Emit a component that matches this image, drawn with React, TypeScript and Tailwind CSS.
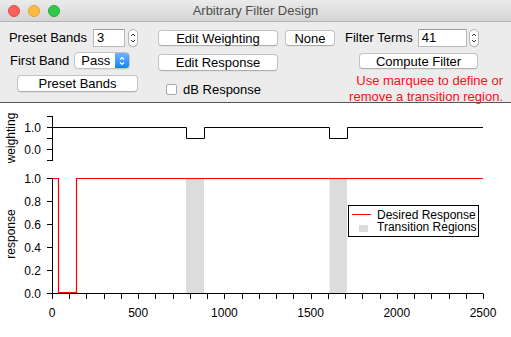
import React from "react";

const font = { fontFamily: '"Liberation Sans", Arial, sans-serif' };

function Stepper() {
  return (
    <div className="w-[10px] h-[18px] rounded-full border border-[#b5b5b5] bg-white flex flex-col items-center justify-center shadow-[0_0.5px_0.5px_rgba(0,0,0,0.15)]">
      <svg width="8" height="14" viewBox="0 0 8 14">
        <path d="M2 5 L4 3 L6 5" fill="none" stroke="#333" strokeWidth="1" />
        <path d="M2 9 L4 11 L6 9" fill="none" stroke="#333" strokeWidth="1" />
      </svg>
    </div>
  );
}

function Button({ w, h = 17, children }: { w: number; h?: number; children: React.ReactNode }) {
  return (
    <div
      className="bg-white rounded-[4px] border border-[#c3c3c3] border-b-[#aeaeae] flex items-center justify-center text-[13px] text-black leading-none whitespace-nowrap shadow-[0_0.5px_0.5px_rgba(0,0,0,0.08)]"
      style={{ width: w, height: h }}
    >
      {children}
    </div>
  );
}

export default function App() {
  const xs = (v: number) => 52 + (v * 431) / 2500;
  const minor = Array.from({ length: 26 }, (_, i) => xs(i * 100));
  const major = [0, 500, 1000, 1500, 2000, 2500];
  const respTicks = [0, 0.2, 0.4, 0.6, 0.8, 1.0];
  const yr = (v: number) => 190.5 - v * 115;
  return (
    <div className="w-[511px] h-[337px] bg-white overflow-hidden" style={font}>
      {/* title bar */}
      <div className="h-[22px] bg-gradient-to-b from-[#ebebeb] to-[#d5d5d5] border-b border-[#b3b3b3] flex items-center relative">
        <div className="flex items-center gap-[8px] pl-[8px]">
          <div className="w-[12px] h-[12px] rounded-full bg-[#fc605c] border border-[#de4a45]" />
          <div className="w-[12px] h-[12px] rounded-full bg-[#fdbc40] border border-[#dea135]" />
          <div className="w-[12px] h-[12px] rounded-full bg-[#34c84a] border border-[#27aa35]" />
        </div>
        <div className="flex-1 text-center text-[13px] text-[#4d4d4d] pr-[60px] whitespace-nowrap">Arbitrary Filter Design</div>
      </div>

      {/* controls */}
      <div className="h-[81px] bg-[#ececec] border-b border-[#555] flex">
        {/* col 1 */}
        <div className="w-[128px] ml-[10px] flex flex-col shrink-0">
          <div className="mt-[7px] h-[18px] flex items-center justify-end">
            <span className="text-[13px] text-black whitespace-nowrap">Preset Bands</span>
            <div className="ml-[6px] w-[32px] h-[18px] shrink-0 bg-white border border-[#b8b8b8] border-t-[#9c9c9c] text-[13px] flex items-center pl-[3px]">3</div>
            <div className="ml-[3px] shrink-0">
              <Stepper />
            </div>
          </div>
          <div className="mt-[5px] h-[17px] flex items-center">
            <span className="text-[13px] text-black whitespace-nowrap">First Band</span>
            <div className="ml-[5px] w-[56px] h-[17px] shrink-0 rounded-[4px] bg-white border border-[#c3c3c3] flex items-center overflow-hidden shadow-[0_0.5px_0.5px_rgba(0,0,0,0.1)]">
              <span className="flex-1 text-[13px] pl-[6px] leading-none">Pass</span>
              <div className="w-[14px] h-full bg-gradient-to-b from-[#6cb3fa] to-[#0a80ff] flex items-center justify-center">
                <svg width="8" height="12" viewBox="0 0 8 12">
                  <path d="M2 4.5 L4 2.5 L6 4.5" fill="none" stroke="#fff" strokeWidth="1.2" />
                  <path d="M2 7.5 L4 9.5 L6 7.5" fill="none" stroke="#fff" strokeWidth="1.2" />
                </svg>
              </div>
            </div>
          </div>
          <div className="mt-[6px] ml-[7px]">
            <Button w={121}>Preset Bands</Button>
          </div>
        </div>

        {/* col 2 */}
        <div className="ml-[20px] flex flex-col shrink-0">
          <div className="mt-[8px] flex">
            <Button w={120} h={16}>Edit Weighting</Button>
            <div className="ml-[7px]">
              <Button w={50} h={16}>None</Button>
            </div>
          </div>
          <div className="mt-[8px]">
            <Button w={120}>Edit Response</Button>
          </div>
          <div className="mt-[12px] ml-[8px] flex items-center">
            <div className="w-[11px] h-[11px] rounded-[2px] bg-white border border-[#a8a8a8]" />
            <span className="ml-[6px] text-[13px] text-black leading-none whitespace-nowrap">dB Response</span>
          </div>
        </div>

        {/* col 3 */}
        <div className="ml-[8px] w-[160px] flex flex-col shrink-0">
          <div className="mt-[7px] h-[18px] flex items-center pl-[2px]">
            <span className="text-[13px] text-black whitespace-nowrap">Filter Terms</span>
            <div className="ml-[5px] w-[49px] h-[18px] shrink-0 bg-white border border-[#b8b8b8] border-t-[#9c9c9c] text-[13px] flex items-center pl-[3px]">41</div>
            <div className="ml-[2px] shrink-0">
              <Stepper />
            </div>
          </div>
          <div className="mt-[6px] ml-[16px]">
            <Button w={119} h={16}>Compute Filter</Button>
          </div>
          <div className="mt-[4px] text-right text-[13px] leading-[16px] text-[#fc0d1b] whitespace-nowrap">
            Use marquee to define or
            <br />
            remove a transition region.
          </div>
        </div>
      </div>

      {/* plot */}
      <svg width="511" height="233" viewBox="0 0 511 233" style={font}>
        {/* weighting */}
        <line x1="52.5" y1="13" x2="52.5" y2="58" stroke="#000" />
        {[13.5, 24.5, 35.5, 46.5, 57.5].map((y) => (
          <line key={y} x1="47" y1={y} x2="52" y2={y} stroke="#000" />
        ))}
        <text x="41" y="28.5" fontSize="12" textAnchor="end">1.0</text>
        <text x="41" y="50.5" fontSize="12" textAnchor="end">0.0</text>
        <text x="0" y="0" fontSize="12" textAnchor="middle" transform="translate(15 35) rotate(-90)">weighting</text>
        <path d="M52 24.5 H186.5 V35.5 H204.5 V24.5 H329.5 V35.5 H347.5 V24.5 H483" fill="none" stroke="#000" />

        {/* response */}
        <rect x="186" y="75" width="18" height="115.5" fill="#dcdcdc" />
        <rect x="329.5" y="75" width="17.5" height="115.5" fill="#dcdcdc" />
        <line x1="52.5" y1="75" x2="52.5" y2="191" stroke="#000" />
        {respTicks.map((v) => (
          <g key={v}>
            <line x1="47" y1={yr(v)} x2="52" y2={yr(v)} stroke="#000" />
            <text x="41" y={yr(v) + 4.3} fontSize="12" textAnchor="end">{v.toFixed(1)}</text>
          </g>
        ))}
        <text x="0" y="0" fontSize="12" textAnchor="middle" transform="translate(15 131) rotate(-90)">response</text>
        <line x1="52" y1="190.5" x2="483" y2="190.5" stroke="#000" />
        {minor.map((x, i) => (
          <line key={i} x1={Math.round(x) + 0.5} y1="190.5" x2={Math.round(x) + 0.5} y2="196" stroke="#000" />
        ))}
        {major.map((v) => (
          <text key={v} x={xs(v)} y="214" fontSize="12" textAnchor="middle">{v}</text>
        ))}
        <path d="M52 75.5 H58.5 V189.5 H76.5 V75.5 H483" fill="none" stroke="#ff0000" strokeWidth="1.2" />

        {/* legend */}
        <rect x="348.5" y="102.5" width="130" height="31" fill="#fff" stroke="#000" />
        <line x1="352" y1="111.5" x2="371" y2="111.5" stroke="#ff0000" />
        <rect x="359" y="122" width="9" height="7" fill="#dcdcdc" />
        <text x="377" y="115.5" fontSize="12">Desired Response</text>
        <text x="377" y="128" fontSize="12">Transition Regions</text>
      </svg>
    </div>
  );
}
